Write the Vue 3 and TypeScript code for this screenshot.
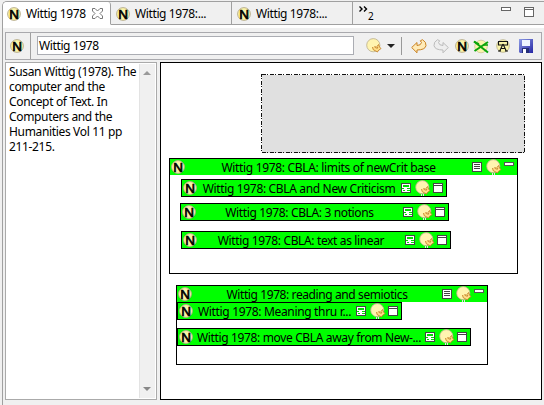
<script setup lang="ts">
import { defineComponent, h } from 'vue'

const NoteIcon = defineComponent({
  name: 'NoteIcon',
  setup() {
    return () =>
      h('svg', { width: 14, height: 14, viewBox: '0 0 14 14', style: 'flex:none;display:block' }, [
        h('circle', { cx: 7, cy: 7, r: 6.4, fill: '#fbf3a6', stroke: '#b3a98c', 'stroke-width': 0.9 }),
        h('text', { x: 7, y: 12, 'text-anchor': 'middle', 'font-size': 13.5, 'font-family': 'Liberation Sans, sans-serif', stroke: '#000', 'stroke-width': 0.7, 'letter-spacing': 0 }, 'N'),
      ])
  },
})

const ChickIcon = defineComponent({
  name: 'ChickIcon',
  props: { legs: { type: Boolean, default: true } },
  setup(props) {
    return () =>
      h('svg', { width: 16, height: 16, viewBox: '0 0 16 16', style: 'flex:none;display:block' }, [
        h('circle', { cx: 7.3, cy: 7.2, r: 6.6, fill: '#fff4b0', stroke: '#b9ad8c', 'stroke-width': 0.8 }),
        props.legs ? h('path', { d: 'M6.5 14v2M8.5 14v2', stroke: '#e9d9e6', 'stroke-width': 1 }) : null,
        h('path', { d: 'M6.500 9Q6.500 12.500 9.500 12.800L11.500 14 12 12.800 15 10.500 13.500 9 12.500 6.500 11 8.500 12 10H9.800V8.800H8.200', fill: '#ffe08a', stroke: '#c4822a', 'stroke-width': 0.9 }),
      ])
  },
})

interface Node { title: string; x: number; y: number; w: number; spacing: number }
interface Group extends Node { h: number; rows: Node[] }

const groups: Group[] = [
  {
    title: 'Wittig 1978: CBLA: limits of newCrit base', x: 8, y: 95, w: 349, h: 116, spacing: -0.32,
    rows: [
      { title: 'Wittig 1978: CBLA and New Criticism', x: 11, y: 20, w: 266, spacing: -0.34 },
      { title: 'Wittig 1978: CBLA: 3 notions', x: 10, y: 44, w: 269, spacing: -0.36 },
      { title: 'Wittig 1978: CBLA: text as linear', x: 11, y: 72, w: 270, spacing: -0.36 },
    ],
  },
  {
    title: 'Wittig 1978: reading and semiotics', x: 15, y: 222, w: 312, h: 80, spacing: -0.4,
    rows: [
      { title: 'Wittig 1978: Meaning thru r...', x: 0, y: 16, w: 225, spacing: -0.33 },
      { title: 'Wittig 1978: move CBLA away from New-...', x: 0, y: 42, w: 294, spacing: -0.35 },
    ],
  },
]

const citation = ['Susan Wittig (1978). The', 'computer and the', 'Concept of Text. In', 'Computers and the', 'Humanities Vol 11 pp', '211-215.'].join('\n')
const px = (n: Node) => ({ left: n.x + 'px', top: n.y + 'px', width: n.w + 'px' })
</script>

<template>
  <div class="window">
    <header class="tabs">
      <div class="tab active">
        <NoteIcon /><span>Wittig 1978</span>
        <svg class="close" width="11" height="11" viewBox="0 0 11 11"><path d="M.5.5h2.500l2.500 2.500L8 .5h2.500V3L8 5.500l2.500 2.500v2.500H8L5.500 8 3 10.500H.5V8L3 5.500.5 3z" fill="#fff" stroke="#777" /></svg>
      </div>
      <div class="tab second"><NoteIcon /><span>Wittig 1978:...</span></div>
      <div class="tab third"><NoteIcon /><span>Wittig 1978:...</span></div>
      <div class="more">
        <svg width="9" height="6" viewBox="0 0 9 6"><path d="M.5.5 3 3 .5 5.500M5 .5 7.500 3 5 5.500" fill="none" stroke="#000" stroke-width="1.4" /></svg>
        <span>2</span>
      </div>
      <div class="controls">
        <svg width="34" height="12" viewBox="0 0 34 12" fill="#fff" stroke="#666" shape-rendering="crispEdges">
          <rect x=".5" y="1.5" width="9" height="3" /><rect x="23.5" y="1.5" width="9" height="9" /><path d="M23 3.500h10" />
        </svg>
      </div>
    </header>
    <div class="strip"></div>

    <main class="body">
      <div class="toolbar">
        <div class="kind"><NoteIcon /></div>
        <div class="field">Wittig 1978</div>
        <div class="tools">
          <ChickIcon :legs="false" />
          <svg class="caret" width="8" height="4" viewBox="0 0 8 4"><path d="M0 0h8L4 4z" fill="#222" /></svg>
          <i class="divider"></i>
          <svg class="undo" width="16" height="15" viewBox="0 0 16 15"><path d="M.7 8.500 6 3.500V6.500q4 0 4.500-3L9.300 1.800 11.500.7q4 2.300 3.500 6Q14 11 6 11v2.800z" fill="#ffebb8" stroke="#c98222" /></svg>
          <svg class="redo" width="16" height="15" viewBox="0 0 16 15"><path d="M15.300 8.500 10 3.500V6.500q-4 0-4.500-3L6.700 1.800 4.500.7Q.5 3 1 6.700 2 11 10 11v2.800z" fill="#eee" stroke="#bbb" /></svg>
          <NoteIcon class="note" />
          <svg class="cross" width="16" height="15" viewBox="0 0 16 15"><circle cx="8" cy="7.500" r="6.300" fill="#faf5aa" stroke="#c4bd92" stroke-width=".7" /><path d="M1 2.500 15 13.500M15 3 1.500 12" stroke="#0ba40b" stroke-width="2" /><path d="M1 2.500 6 5M10 6h5" stroke="#0ba40b" stroke-width="1.500" /></svg>
          <svg class="label" width="14" height="14" viewBox="0 0 14 14"><circle cx="7" cy="7" r="6.300" fill="#faf5aa" stroke="#b5ad86" stroke-width=".8" /><path d="M2.500 2.500h9v3.500h-9zM7 5 3.500 12.500M7 5l3.500 7.500M4.500 9.500h5M2 12h3M9 12h3" fill="none" stroke="#111" stroke-width="1.100" /></svg>
          <svg class="save" width="14" height="14" viewBox="0 0 14 14">
            <defs><linearGradient id="disk" x2="1" y2="1"><stop stop-color="#8e9de5" /><stop offset="1" stop-color="#2525a4" /></linearGradient></defs>
            <path d="M0 0h14v14H1L0 13z" fill="url(#disk)" /><path d="M3 1h8v6H3z" fill="#eef5ff" /><path d="M3 9h7v5H3z" fill="#253078" /><path d="M4 10h3v4H4z" fill="#fff" />
          </svg>
        </div>
      </div>

      <div class="panes">
        <aside class="notes">
          <div class="copy">{{ citation }}</div>
          <div class="scroll">
            <svg width="8" height="4" viewBox="0 0 8 4"><path d="M0 4h8L4 0z" fill="#999" /></svg>
            <svg width="8" height="4" viewBox="0 0 8 4"><path d="M0 0h8L4 4z" fill="#888" /></svg>
          </div>
        </aside>

        <section class="canvas">
          <svg class="ghost" width="265" height="79" viewBox="0 0 265 79"><rect x=".5" y=".5" width="263" height="78" fill="#e0e0e0" stroke="#111" stroke-dasharray="4 1.500 1 1.500" shape-rendering="crispEdges" /></svg>
          <article v-for="g in groups" :key="g.title" class="group" :style="{ ...px(g), height: g.h + 'px' }">
            <div class="bar">
              <NoteIcon />
              <span class="title" :style="{ letterSpacing: g.spacing + 'px' }">{{ g.title }}</span>
              <svg class="glyph" width="10" height="10" viewBox="0 0 10 10" shape-rendering="crispEdges"><path d="M.5.5h9v9h-9z" fill="#fff" stroke="#444" /><path d="M2 2.500h6M2 4.500h6M2 6.500h6" stroke="#444" /></svg>
              <ChickIcon class="chick" />
              <svg class="mini" width="10" height="4" viewBox="0 0 10 4" shape-rendering="crispEdges"><path d="M.5.5h9v3h-9z" fill="#fff" stroke="#555" /></svg>
            </div>
            <div v-for="r in g.rows" :key="r.title" class="row" :style="px(r)">
              <NoteIcon />
              <span class="title" :style="{ letterSpacing: r.spacing + 'px' }">{{ r.title }}</span>
              <svg class="glyph" width="10" height="10" viewBox="0 0 10 10" shape-rendering="crispEdges"><path d="M.5.5h9v9h-9z" fill="#fff" stroke="#444" /><path d="M2 2h6v2H2zM1 5h2v1H1zM6 5h3v1H6zM2 7h2v1H2zM6 7h3v1H6z" fill="#00dc00" /></svg>
              <ChickIcon class="chick" />
              <svg class="glyph" width="10" height="10" viewBox="0 0 10 10" shape-rendering="crispEdges"><path d="M.5.5h9v9h-9z" fill="#fff" stroke="#444" /><path d="M1 2.500h8" stroke="#444" /></svg>
            </div>
          </article>
        </section>
      </div>
    </main>
  </div>
</template>

<style>
body { background: #f0f0f0; overflow: hidden; }
</style>

<style scoped>
.window { width: 544px; height: 405px; padding: 1px 0 0 2px; box-sizing: border-box; background: #f0f0f0; font: 12px/15px "Noto Sans", "Open Sans", sans-serif; letter-spacing: -0.38px; color: #000; white-space: nowrap; overflow: hidden; }
.tabs { display: flex; height: 24px; box-sizing: border-box; border-top: 1px solid #a0a0a0; border-left: 1px solid #a0a0a0; border-top-left-radius: 5px; }
.tab { display: flex; align-items: center; gap: 5px; box-sizing: border-box; border-right: 1px solid #a0a0a0; border-bottom: 1px solid #a0a0a0; padding: 1px 0 0 5px; }
.tab.active { width: 108px; padding-left: 4px; background: #fff; border-bottom-color: #fff; border-top-left-radius: 4px; border-top-right-radius: 3px; }
.second { width: 121px; }
.third { width: 121px; }
.close { margin-left: auto; margin-right: 7px; }
.more { flex: 1; display: flex; border-bottom: 1px solid #a0a0a0; padding: 4px 0 0 6px; }
.more span { font-size: 10px; margin-top: 3px; }
.controls { padding: 4px 9px 0 0; border-bottom: 1px solid #a0a0a0; }
.controls svg { display: block; }
.strip { height: 3px; background: #fff; border-left: 1px solid #a0a0a0; }
.body { height: 377px; box-sizing: border-box; border-left: 1px solid #a0a0a0; padding: 4px 2px 0 2px; }
.toolbar { display: flex; height: 28px; box-sizing: border-box; border: 1px solid #a9a9ad; width: 537px; }
.kind { display: flex; align-items: center; padding-left: 4px; width: 20px; border-right: 1px solid #a0a0a0; }
.field { width: 317px; box-sizing: border-box; height: 19px; margin: 3px 0 0 6px; border: 1px solid #abadb3; background: #fff; padding: 1px 1px; line-height: 15px; }
.tools { display: flex; align-items: center; padding-left: 12px; }
.caret { margin-left: 5px; }
.divider { width: 1px; height: 18px; background: #999; margin: 0 9px 0 6px; }
.redo { margin-left: 6px; }
.note { margin-left: 6px; }
.cross { margin-left: 4px; }
.label { margin-left: 7px; }
.save { margin-left: 9px; }
.panes { display: flex; gap: 3px; margin-top: 2px; height: 338px; }
.notes { display: flex; width: 152px; box-sizing: border-box; border: 1px solid #aaa; background: #fff; }
.copy { flex: 1; padding: 1px 0 0 3px; white-space: pre; letter-spacing: -0.34px; }
.scroll { width: 16px; margin: 1px; background: #f0f0f0; box-shadow: inset 1px 0 #e3e3e3; display: flex; flex-direction: column; justify-content: space-between; align-items: center; padding: 7px 0; box-sizing: border-box; }
.canvas { position: relative; width: 382px; box-sizing: border-box; border: 1px solid #000; background: #fff; }
.ghost { position: absolute; left: 100px; top: 11px; }
.group { position: absolute; box-sizing: border-box; border: 1px solid #000; background: #fff; }
.bar, .row { display: flex; align-items: center; background: #0f0; box-sizing: border-box; height: 16px; padding: 0 3px 0 1px; }
.row { position: absolute; height: 18px; border: 1px solid #000; }
.title { flex: 1; text-align: center; min-width: 0; }
.glyph { flex: none; }
.chick { margin: 0 2px 0 4px; }
.mini { align-self: flex-start; margin-top: 3px; }
</style>
